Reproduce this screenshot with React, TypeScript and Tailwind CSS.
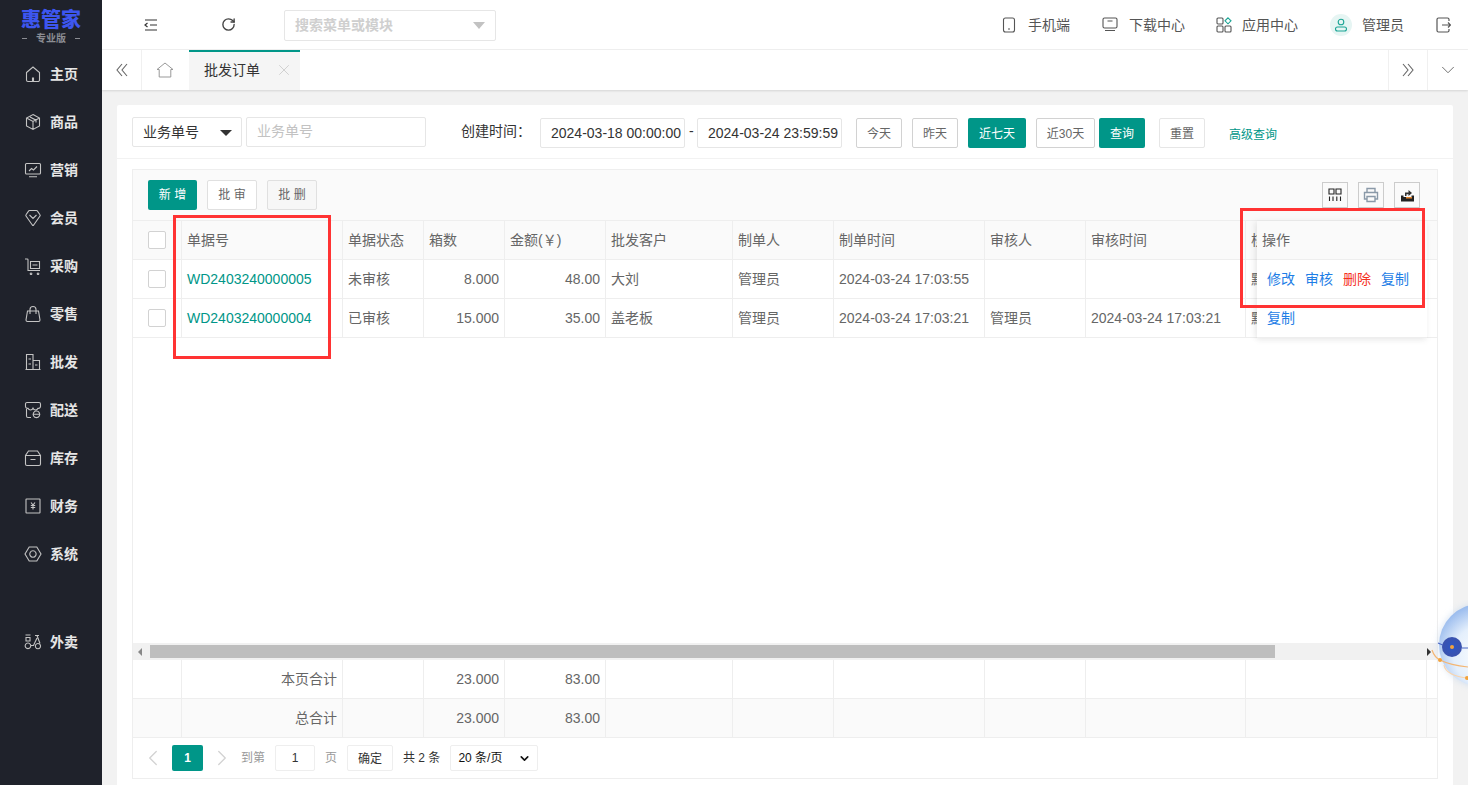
import {
  ChevronDown,
  ChevronLeft,
  ChevronRight,
  RotateCw,
  X,
} from "lucide-react";

const grid =
  "grid grid-cols-[49px_161px_81px_81px_101px_127px_101px_151px_101px_160px_181px_10px]";

const navIcons: Record<string, React.ReactNode> = {
  home: <path d="M2.500 7.500 9 2l6.500 5.500V15a1.500 1.500 0 0 1-1.500 1.500H4A1.500 1.500 0 0 1 2.500 15ZM8.500 16v-3h1v3" />,
  box: <path d="M9 1.500 15.500 5v8L9 16.500 2.500 13V5ZM2.500 5 9 8.500 15.500 5M9 8.500v8M6 4l6 3.200v2.300" />,
  chart: <path d="M2.500 2.500h13a1 1 0 0 1 1 1v8.500a1 1 0 0 1-1 1h-13a1 1 0 0 1-1-1V3.500a1 1 0 0 1 1-1ZM5 15.800h8M5 10l2.500-2.500L9.500 9 13 5.500" />,
  gem: <path d="M5.500 1.500h7a1 1 0 0 1 .8.400L16 5.800a1 1 0 0 1 0 1.200L9.700 16a1 1 0 0 1-1.400 0L2 7a1 1 0 0 1 0-1.200L4.700 1.900A1 1 0 0 1 5.500 1.500ZM5.500 6 9 9.500 12.500 6" />,
  cart: <path d="M1 2h2.200c.5 0 .8.300.8.800V13.500h12M6.500 4.500h9v7h-9ZM8.500 8h5M7 16a.8.800 0 1 0 .1 0M14 16a.8.800 0 1 0 .1 0" />,
  bag: <path d="M3.500 6h11l1.500 9a1.500 1.500 0 0 1-1.500 1.500h-11A1.500 1.500 0 0 1 2 15ZM6 9V4.500a3 3 0 0 1 6 0V9" />,
  shop: <path d="M2.500 1.500h6.500v15H2.500ZM9 7.500h6.500v9H9ZM1.500 16.500h15M4.500 6h2.500M4.500 11h2.500M11 12h2.500" />,
  store: <path d="M3 1.500h12a1.500 1.500 0 0 1 1.500 1.500v2.500a2 2 0 0 1-2.500 1.800 2.700 2.700 0 0 1-5 0 2.700 2.700 0 0 1-5 0A2 2 0 0 1 1.500 5.500V3A1.500 1.500 0 0 1 3 1.500ZM2.500 8v7a1.500 1.500 0 0 0 1.500 1.500h3M12.500 10a3.300 3.300 0 1 1-.1 0ZM9.500 13.300h6" />,
  archive: <path d="M4.500 2h9l3 4.500V15a1.500 1.500 0 0 1-1.500 1.500H3A1.500 1.500 0 0 1 1.500 15V6.500ZM1.500 6.500h15M6.500 10.500h5" />,
  yen: <path d="M2.500 2h13a.5.500 0 0 1 .5.500v13a.5.500 0 0 1-.5.500h-13a.5.500 0 0 1-.5-.500v-13a.5.500 0 0 1 .5-.500ZM7 5.500 9 8l2-2.500M9 8v4.500M6.800 8.500h4.400M6.800 10.500h4.400" />,
  gear: <path d="M5.200 2h7.600L17 9l-4.200 7H5.200L1 9ZM9 5.800a3.200 3.200 0 1 1-.1 0Z" />,
  bike: <path d="M1.500 2h5M2 4.500h4V8H2ZM11 2.500h4M13 2.500l3 8M13 5l-3.500 7.500H6.500M4 10a2.800 2.800 0 1 1-.1 0ZM14 10.500a2.600 2.600 0 1 1-.1 0Z" />,
};

const navItems = [
  ["home", "主页"],
  ["box", "商品"],
  ["chart", "营销"],
  ["gem", "会员"],
  ["cart", "采购"],
  ["bag", "零售"],
  ["shop", "批发"],
  ["store", "配送"],
  ["archive", "库存"],
  ["yen", "财务"],
  ["gear", "系统"],
];

function NavItem({ icon, label }: { icon: string; label: string }) {
  return (
    <div className="flex h-12 items-center pl-6 text-[14px] font-bold text-[#e6e6e6]">
      <svg viewBox="0 0 18 18" className="mr-[8px] h-[18px] w-[18px] fill-none stroke-[#c4c4c4] stroke-[1.1]">
        {navIcons[icon]}
      </svg>
      {label}
    </div>
  );
}

function Sidebar() {
  return (
    <aside className="flex w-[102px] shrink-0 flex-col bg-[#1f222b]">
      <div className="flex h-[50px] flex-col items-center pt-[9px]">
        <div className="text-[20px] leading-[23px] font-black text-[#3d56f0]">惠管家</div>
        <div className="flex w-[58px] items-center justify-between text-[10px] leading-[13px] font-bold text-[#8b8d93]">
          <span className="h-px w-[5px] bg-[#8b8d93]" />
          <span>专业版</span>
          <span className="h-px w-[5px] bg-[#8b8d93]" />
        </div>
      </div>
      {navItems.map(([icon, label]) => (
        <NavItem key={label} icon={icon} label={label} />
      ))}
      <div className="mt-10">
        <NavItem icon="bike" label="外卖" />
      </div>
    </aside>
  );
}

function TopLink({ icon, label, className }: { icon: React.ReactNode; label: string; className: string }) {
  return (
    <div className={`flex items-center text-[14px] text-[#555] ${className}`}>
      {icon}
      <span className="pt-[1px]">{label}</span>
    </div>
  );
}

function TopBar() {
  return (
    <header className="flex h-[50px] shrink-0 items-center border-b border-[#f0f0f0] bg-white text-[#444]">
      <svg viewBox="0 0 14 12" className="ml-[42px] h-3 w-[14px] fill-none stroke-[#333] stroke-[1.2]">
        <path d="M1 1h12M6 6h7M1 11h12M3.500 4 1 6l2.500 2" />
      </svg>
      <RotateCw className="ml-[63px] h-[15px] w-[15px] text-[#444]" strokeWidth={2.2} />
      <div className="mt-[1px] ml-[48px] flex h-[31px] w-[212px] items-center justify-between rounded-[2px] border border-[#e6e6e6] pr-[10px] pl-[10px] text-[14px] font-bold text-[#cfcfcf]">
        搜索菜单或模块
        <span className="h-0 w-0 border-x-[6px] border-t-[7px] border-x-transparent border-t-[#c2c2c2]" />
      </div>
      <div className="ml-auto flex items-center">
        <TopLink
          className="mr-[32px]"
          label="手机端"
          icon={
            <svg viewBox="0 0 14 16" className="mr-[12px] h-4 w-[14px] fill-none stroke-[#555] stroke-[1.1]">
              <rect x="1.500" y="1" width="11" height="14" rx="2" />
              <path d="M6 12h2" />
            </svg>
          }
        />
        <TopLink
          className="mr-[31px]"
          label="下载中心"
          icon={
            <svg viewBox="0 0 16 15" className="mr-[11px] h-[15px] w-4 fill-none stroke-[#555] stroke-[1.1]">
              <rect x="1" y="1" width="14" height="10" rx="1.500" />
              <path d="M5.500 4h5M3 13.500h10" />
            </svg>
          }
        />
        <TopLink
          className="mr-[32px]"
          label="应用中心"
          icon={
            <svg viewBox="0 0 16 16" className="mr-[10px] h-4 w-4 fill-none stroke-[#555] stroke-[1.1]">
              <rect x="1" y="1" width="6" height="6" rx="1" />
              <rect x="1" y="9" width="6" height="6" rx="1" />
              <rect x="9" y="9" width="6" height="6" rx="1" />
              <path d="m12 .8 3 3-3 3-3-3Z" className="stroke-[#1ba595]" />
            </svg>
          }
        />
        <TopLink
          className="mr-[32px]"
          label="管理员"
          icon={
            <span className="mr-[10px] flex h-[22px] w-[22px] items-center justify-center rounded-full bg-[#e6f5f3]">
              <svg viewBox="0 0 14 14" className="h-[14px] w-[14px] fill-none stroke-[#1ba595] stroke-[1.1]">
                <circle cx="7" cy="4" r="2.800" />
                <rect x="1.500" y="9" width="11" height="4" rx="2" />
              </svg>
            </span>
          }
        />
        <svg viewBox="0 0 15 16" className="mr-[17px] h-4 w-[15px] fill-none stroke-[#555] stroke-[1.2]">
          <path d="M13 4V2.500A1.500 1.500 0 0 0 11.500 1h-9A1.500 1.500 0 0 0 1 2.500v11A1.500 1.500 0 0 0 2.500 15h9a1.500 1.500 0 0 0 1.500-1.500V12M6 8h8.500M12 5.500 14.500 8 12 10.500" />
        </svg>
      </div>
    </header>
  );
}

function DoubleChevron({ dir }: { dir: "left" | "right" }) {
  return (
    <svg viewBox="0 0 12 14" className="h-[14px] w-3 fill-none stroke-[#666] stroke-[1.1]">
      <path d={dir === "left" ? "M6 1 1 7l5 6M11 1 6 7l5 6" : "M1 1l5 6-5 6M6 1l5 6-5 6"} />
    </svg>
  );
}

function TabBar() {
  return (
    <div className="z-10 flex h-[40px] shrink-0 items-stretch bg-white shadow-[0_1px_2px_rgba(0,0,0,0.12)]">
      <div className="flex w-[40px] items-center justify-center border-r border-[#f0f0f0]">
        <DoubleChevron dir="left" />
      </div>
      <div className="flex w-[47px] items-center justify-center pr-[2px]">
        <svg viewBox="0 0 18 16" className="h-[16px] w-[18px] fill-none stroke-[#999] stroke-[1]">
          <path d="M9 1 17 7.500H14.800V15H3.200V7.500H1Z" />
        </svg>
      </div>
      <div className="flex w-[111px] items-center border-t-2 border-[#009688] bg-[#f5f5f5] pb-[2px] pl-[15px] text-[14px] text-[#333]">
        批发订单
        <X className="ml-[15px] h-[18px] w-[18px] text-[#c4c4c4]" strokeWidth={1} />
      </div>
      <div className="ml-auto flex w-[40px] items-center justify-center border-x border-[#f0f0f0]">
        <DoubleChevron dir="right" />
      </div>
      <div className="flex w-[40px] items-center justify-center">
        <ChevronDown className="h-[22px] w-[22px] text-[#666]" strokeWidth={1} />
      </div>
    </div>
  );
}

function QuickButton({ label, className, active }: { label: string; className: string; active?: boolean }) {
  return (
    <button
      className={`flex h-[30px] items-center justify-center rounded-[2px] pt-[2px] text-[12px] ${
        active ? "bg-[#009688] text-white" : "border border-[#d2d2d2] bg-white text-[#666]"
      } ${className}`}
    >
      {label}
    </button>
  );
}

function DateBox({ value }: { value: string }) {
  return (
    <div className="mt-[2px] flex h-[30px] w-[145px] items-center rounded-[2px] border border-[#e6e6e6] pt-[1px] pl-[10px] text-[14px] whitespace-nowrap text-[#333]">
      {value}
    </div>
  );
}

function FilterBar() {
  return (
    <div className="flex h-[54px] items-center border-b border-[#f2f2f2] pl-[15px]">
      <div className="flex h-[30px] w-[110px] items-center justify-between rounded-[2px] border border-[#e6e6e6] pt-[2px] pr-[9px] pl-[10px] text-[14px] text-[#333]">
        业务单号
        <span className="h-0 w-0 border-x-[6px] border-t-[6px] border-x-transparent border-t-[#333]" />
      </div>
      <div className="ml-[4px] flex h-[30px] w-[180px] items-center rounded-[2px] border border-[#e6e6e6] pl-[10px] text-[14px] text-[#c2c2c2]">
        业务单号
      </div>
      <span className="mr-[9px] ml-[35px] text-[14px] text-[#333]">创建时间：</span>
      <DateBox value="2024-03-18 00:00:00" />
      <span className="mx-[4px] w-[4px] text-[14px] text-[#333]">-</span>
      <DateBox value="2024-03-24 23:59:59" />
      <div className="mt-[2px] flex items-center">
        <QuickButton label="今天" className="ml-[14px] w-[46px]" />
        <QuickButton label="昨天" className="ml-[10px] w-[46px]" />
        <QuickButton label="近七天" className="ml-[10px] w-[58px]" active />
        <QuickButton label="近30天" className="ml-[10px] w-[59px]" />
        <QuickButton label="查询" className="ml-[4px] w-[46px]" active />
        <QuickButton label="重置" className="ml-[14px] w-[46px] border-[#e6e6e6]!" />
        <span className="ml-[24px] pt-[4px] text-[12px] text-[#009688]">高级查询</span>
      </div>
    </div>
  );
}

function ToolIcon({ children }: { children: React.ReactNode }) {
  return (
    <span className="flex h-[26px] w-[26px] items-center justify-center border border-[#cccccc]">{children}</span>
  );
}

function Toolbar() {
  return (
    <div className="flex h-[51px] shrink-0 items-center border-b border-[#eeeeee] bg-[#fafafa] pr-[17px] pl-[15px]">
      <button className="h-[30px] w-[49px] rounded-[2px] bg-[#009688] text-[12px] text-white">新 增</button>
      <button className="ml-[10px] h-[30px] w-[50px] rounded-[2px] border border-[#e0e0e0] bg-white text-[12px] text-[#666]">
        批 审
      </button>
      <button className="ml-[10px] h-[30px] w-[50px] rounded-[2px] border border-[#e0e0e0] bg-[#f7f7f7] text-[12px] text-[#666]">
        批 删
      </button>
      <div className="ml-auto flex gap-[10px]">
        <ToolIcon>
          <svg viewBox="0 0 14 14" className="h-[14px] w-[14px] fill-none stroke-[#222] stroke-[1.1]">
            <path d="M1 1h5v5H1ZM8 1h5v5H8ZM1.500 8.500V13M5 8.500V13M8.800 8.500V13M12.500 8.500V13" />
          </svg>
        </ToolIcon>
        <ToolIcon>
          <svg viewBox="0 0 16 16" className="h-4 w-4 fill-none stroke-[#8a99a8] stroke-[1.4]">
            <path d="M4 5V1.500h8V5M4 12H1.500V5.500h13V12H12M4 9.500h8V14.500H4Z" />
          </svg>
        </ToolIcon>
        <ToolIcon>
          <svg viewBox="0 0 16 16" className="h-4 w-4">
            <path d="M2 8.500h2.500v1.500h8V8.500H15v6H2Z" fill="#222" />
            <path d="M6 9V5.500h3.500V3L13 6l-3.500 3V7.200H7.500V9Z" fill="#333" />
            <path d="M7 10h6v1.500H7Z" fill="#e8862e" />
          </svg>
        </ToolIcon>
      </div>
    </div>
  );
}

function Cell({
  children,
  right,
  className = "",
}: {
  children?: React.ReactNode;
  right?: boolean;
  className?: string;
}) {
  return (
    <div
      className={`flex items-center overflow-hidden border-r border-[#eeeeee] px-[5px] whitespace-nowrap ${
        right ? "justify-end" : ""
      } ${className}`}
    >
      {children}
    </div>
  );
}

// 被固定列盖住的那一列，只露出第一个字的左半边
function ClippedText({ children }: { children: React.ReactNode }) {
  return <span className="inline-block w-[6px] overflow-hidden">{children}</span>;
}

function CheckCell() {
  return (
    <div className="flex items-center justify-center border-r border-[#eeeeee] pr-[1px]">
      <span className="h-[18px] w-[18px] rounded-[2px] border border-[#d2d2d2] bg-white" />
    </div>
  );
}

function HeadRow() {
  const heads = ["单据号", "单据状态", "箱数", "金额(￥)", "批发客户", "制单人", "制单时间", "审核人", "审核时间"];
  return (
    <div className={`${grid} h-[39px] shrink-0 border-b border-[#eeeeee] bg-[#fafafa]`}>
      <CheckCell />
      {heads.map((h) => (
        <Cell key={h}>{h}</Cell>
      ))}
      <Cell>
        <ClippedText>核算门店</ClippedText>
      </Cell>
    </div>
  );
}

function DataRow({ row }: { row: string[] }) {
  return (
    <div className={`${grid} h-[39px] shrink-0 border-b border-[#eeeeee] bg-white`}>
      <CheckCell />
      <Cell className="text-[#009688]">{row[0]}</Cell>
      <Cell>{row[1]}</Cell>
      <Cell right>{row[2]}</Cell>
      <Cell right>{row[3]}</Cell>
      <Cell>{row[4]}</Cell>
      <Cell>{row[5]}</Cell>
      <Cell>{row[6]}</Cell>
      <Cell>{row[7]}</Cell>
      <Cell>{row[8]}</Cell>
      <Cell>
        <ClippedText>默认门店</ClippedText>
      </Cell>
    </div>
  );
}

function TotalRow({ label, boxes, money, gray }: { label: string; boxes: string; money: string; gray?: boolean }) {
  return (
    <div className={`${grid} h-[39px] shrink-0 border-b border-[#eeeeee] ${gray ? "bg-[#fafafa]" : "bg-white"}`}>
      <Cell />
      <Cell right>{label}</Cell>
      <Cell />
      <Cell right>{boxes}</Cell>
      <Cell right>{money}</Cell>
      <Cell />
      <Cell />
      <Cell />
      <Cell />
      <Cell />
      <Cell />
    </div>
  );
}

function ScrollBar() {
  return (
    <div className="flex h-[17px] shrink-0 items-center bg-[#f1f1f1]">
      <span className="ml-[5px] h-0 w-0 border-y-[4px] border-r-[4px] border-y-transparent border-r-[#888]" />
      <span className="ml-[8px] h-[13px] w-[1125px] bg-[#bebebe]" />
      <span className="mr-[6px] ml-auto h-0 w-0 border-y-[4px] border-l-[4px] border-y-transparent border-l-[#333]" />
    </div>
  );
}

function OpColumn() {
  return (
    <div className="absolute top-[51px] left-[1124px] w-[170px] bg-white shadow-[-3px_0_6px_rgba(0,0,0,0.06),0_3px_6px_rgba(0,0,0,0.05)]">
      <div className="flex h-[39px] items-center border-b border-[#eeeeee] bg-[#fafafa] pl-[5px]">操作</div>
      <div className="flex h-[39px] items-center gap-[10px] border-b border-[#eeeeee] pl-[10px] text-[#1e7ee6]">
        <span>修改</span>
        <span>审核</span>
        <span className="text-[#f5301f]">删除</span>
        <span>复制</span>
      </div>
      <div className="flex h-[39px] items-center border-b border-[#eeeeee] pl-[10px] text-[#1e7ee6]">复制</div>
    </div>
  );
}

function Pager() {
  return (
    <div className="flex h-[40px] shrink-0 items-center pl-[7px] text-[12px] text-[#999]">
      <ChevronLeft className="h-[26px] w-[26px] text-[#d2d2d2]" strokeWidth={1.2} />
      <span className="ml-[6px] flex h-[26px] w-[31px] items-center justify-center rounded-[2px] bg-[#009688] font-bold text-white">
        1
      </span>
      <ChevronRight className="ml-[6px] h-[26px] w-[26px] text-[#d2d2d2]" strokeWidth={1.2} />
      <span className="ml-[6px]">到第</span>
      <span className="ml-[10px] flex h-[26px] w-[40px] items-center justify-center rounded-[2px] border border-[#eeeeee] text-[#333]">
        1
      </span>
      <span className="ml-[10px]">页</span>
      <span className="ml-[10px] flex h-[26px] w-[46px] items-center justify-center rounded-[2px] border border-[#eeeeee] pt-[2px] text-[#333]">
        确定
      </span>
      <span className="ml-[10px] text-[#333]">共 2 条</span>
      <span className="ml-[10px] flex h-[26px] w-[88px] items-center justify-between rounded-[2px] border border-[#eeeeee] pr-[6px] pl-[7px] text-[#111]">
        20 条/页
        <ChevronDown className="h-[13px] w-[13px] text-[#111]" strokeWidth={3} />
      </span>
    </div>
  );
}

function OrderTable() {
  return (
    <div className="relative mx-[15px] mt-[10px] flex h-[610px] flex-col border border-[#eeeeee] text-[14px] text-[#666]">
      <Toolbar />
      <HeadRow />
      <DataRow row={["WD2403240000005", "未审核", "8.000", "48.00", "大刘", "管理员", "2024-03-24 17:03:55", "", ""]} />
      <DataRow
        row={[
          "WD2403240000004",
          "已审核",
          "15.000",
          "35.00",
          "盖老板",
          "管理员",
          "2024-03-24 17:03:21",
          "管理员",
          "2024-03-24 17:03:21",
        ]}
      />
      <div className="flex-1 bg-white" />
      <ScrollBar />
      <TotalRow label="本页合计" boxes="23.000" money="83.00" />
      <TotalRow label="总合计" boxes="23.000" money="83.00" gray />
      <Pager />
      <OpColumn />
    </div>
  );
}

function RobotWidget() {
  return (
    <svg viewBox="0 0 40 100" className="absolute top-[600px] right-0 z-30 h-[100px] w-[40px]">
      <defs>
        <radialGradient id="robot-body" cx="0.55" cy="0.62" r="0.62">
          <stop offset="0" stopColor="#ffffff" />
          <stop offset="0.6" stopColor="#e4effc" />
          <stop offset="1" stopColor="#9cbdee" />
        </radialGradient>
        <radialGradient id="robot-eye" cx="0.5" cy="0.5" r="0.5">
          <stop offset="0.2" stopColor="#2f55c0" />
          <stop offset="1" stopColor="#3b52ad" />
        </radialGradient>
        <filter id="robot-glow" x="-30%" y="-30%" width="160%" height="160%">
          <feGaussianBlur stdDeviation="3" />
        </filter>
      </defs>
      <circle cx="52" cy="45" r="42" fill="#bcd0ea" opacity="0.5" filter="url(#robot-glow)" />
      <circle cx="52" cy="45" r="41" fill="url(#robot-body)" />
      <path d="M10 43l7 3M34 48h6" stroke="#4a66c4" strokeWidth="1.200" fill="none" />
      <circle cx="24" cy="47" r="10" fill="url(#robot-eye)" />
      <circle cx="24" cy="47" r="2" fill="#f2a23c" />
      <path d="M4 50c2 6 6 9 8 10 8 4 18 6 28 7" stroke="#f4b673" strokeWidth="1.200" fill="none" />
      <path d="M16 65c1 7 10 12 24 13" stroke="#f9d4ad" strokeWidth="1.200" fill="none" />
      <circle cx="12" cy="60" r="2" fill="#f2a23c" />
      <circle cx="39" cy="78" r="2" fill="#f2a23c" />
    </svg>
  );
}

export default function App() {
  return (
    <div className="relative flex h-screen overflow-hidden bg-[#f2f2f2] font-['Liberation_Sans','Noto_Sans_CJK_SC',sans-serif]">
      <Sidebar />
      <main className="flex min-w-0 flex-1 flex-col">
        <TopBar />
        <TabBar />
        <div className="min-h-0 flex-1 px-[15px] pt-[15px]">
          <div className="h-[720px] rounded-[2px] bg-white">
            <FilterBar />
            <OrderTable />
          </div>
        </div>
      </main>
      {/* 标注框 */}
      <div className="absolute top-[215px] left-[173px] z-20 h-[144px] w-[158px] border-[3px] border-[#ff3333]" />
      <div className="absolute top-[208px] left-[1240px] z-20 h-[100px] w-[185px] border-[3px] border-[#ff3333]" />
      <RobotWidget />
    </div>
  );
}
